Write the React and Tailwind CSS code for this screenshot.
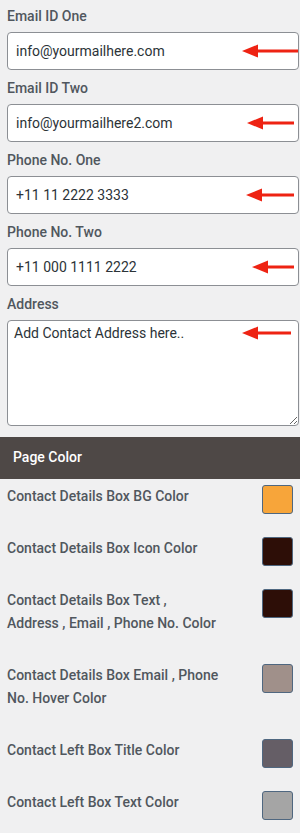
import React from "react";

const font = { fontFamily: "Roboto, 'Liberation Sans', sans-serif" };

function Arrow({ left, width }) {
  return (
    <svg
      className="absolute top-1/2 -translate-y-1/2"
      style={{ left: left + "px" }}
      width={width}
      height="14"
      viewBox={`0 0 ${width} 14`}
    >
      <polygon points="0,7 16,0.5 16,13.5" fill="#ee2313" />
      <rect x="14" y="5.5" width={width - 14} height="3" fill="#ee2313" />
    </svg>
  );
}

function Field({ label, value, arrowLeft, arrowWidth }) {
  return (
    <div className="mb-[8px]">
      <div className="h-[20px] leading-[20px] text-[14px] font-medium text-[#50575e]">{label}</div>
      <div className="relative mt-[6px]">
        <input
          readOnly
          value={value}
          className="block w-full h-[38px] rounded-[4px] border border-[#8c8f94] bg-white pl-[8px] text-[14px] text-[#2c3338] outline-none"
        />
        <Arrow left={arrowLeft} width={arrowWidth} />
      </div>
    </div>
  );
}

const rows = [
  { label: "Contact Details Box BG Color", color: "#f7a53a" },
  { label: "Contact Details Box Icon Color", color: "#2d0e07" },
  { label: "Contact Details Box Text , Address , Email , Phone No. Color", color: "#2d0e07" },
  { label: "Contact Details Box Email , Phone No. Hover Color", color: "#a0908a" },
  { label: "Contact Left Box Title Color", color: "#655e66" },
  { label: "Contact Left Box Text Color", color: "#a5a5a5" },
];

export default function App() {
  return (
    <div className="w-[300px] h-[833px] overflow-hidden bg-[#f0f0f1]" style={font}>
      <div className="pl-[7px] pr-[1px] pt-[6px]">
        <Field label="Email ID One" value="info@yourmailhere.com" arrowLeft={235} arrowWidth={56} />
        <Field label="Email ID Two" value="info@yourmailhere2.com" arrowLeft={240} arrowWidth={47} />
        <Field label="Phone No. One" value="+11 11 2222 3333" arrowLeft={239} arrowWidth={48} />
        <Field label="Phone No. Two" value="+11 000 1111 2222" arrowLeft={245} arrowWidth={42} />
        <div className="mb-[11px]">
          <div className="h-[20px] leading-[20px] text-[14px] font-medium text-[#50575e]">Address</div>
          <div className="relative mt-[6px]">
            <textarea
              readOnly
              defaultValue="Add Contact Address here.."
              className="block w-full h-[106px] rounded-[4px] border border-[#8c8f94] bg-white px-[6px] py-[2px] text-[14px] leading-[21px] text-[#2c3338] outline-none resize-y"
            />
            <div className="absolute left-0 right-0 top-0 h-[26px]">
              <Arrow left={235} width={49} />
            </div>
          </div>
        </div>
      </div>
      <div className="h-[42px] bg-[#4e4846] flex items-center pl-[13px] pb-[2px] text-[14px] font-medium text-white">
        Page Color
      </div>
      <div>
        {rows.map((r) => (
          <div key={r.label} className="flex items-start justify-between pl-[7px] pr-[7px] pt-[6px]">
            <div className="w-[213px] pb-[23px] text-[14px] leading-[23px] font-medium text-[#50575e]">{r.label}</div>
            <div
              className="w-[31px] h-[29px] rounded-[3px] border border-[#4f6780]"
              style={{ backgroundColor: r.color }}
            />
          </div>
        ))}
      </div>
    </div>
  );
}
